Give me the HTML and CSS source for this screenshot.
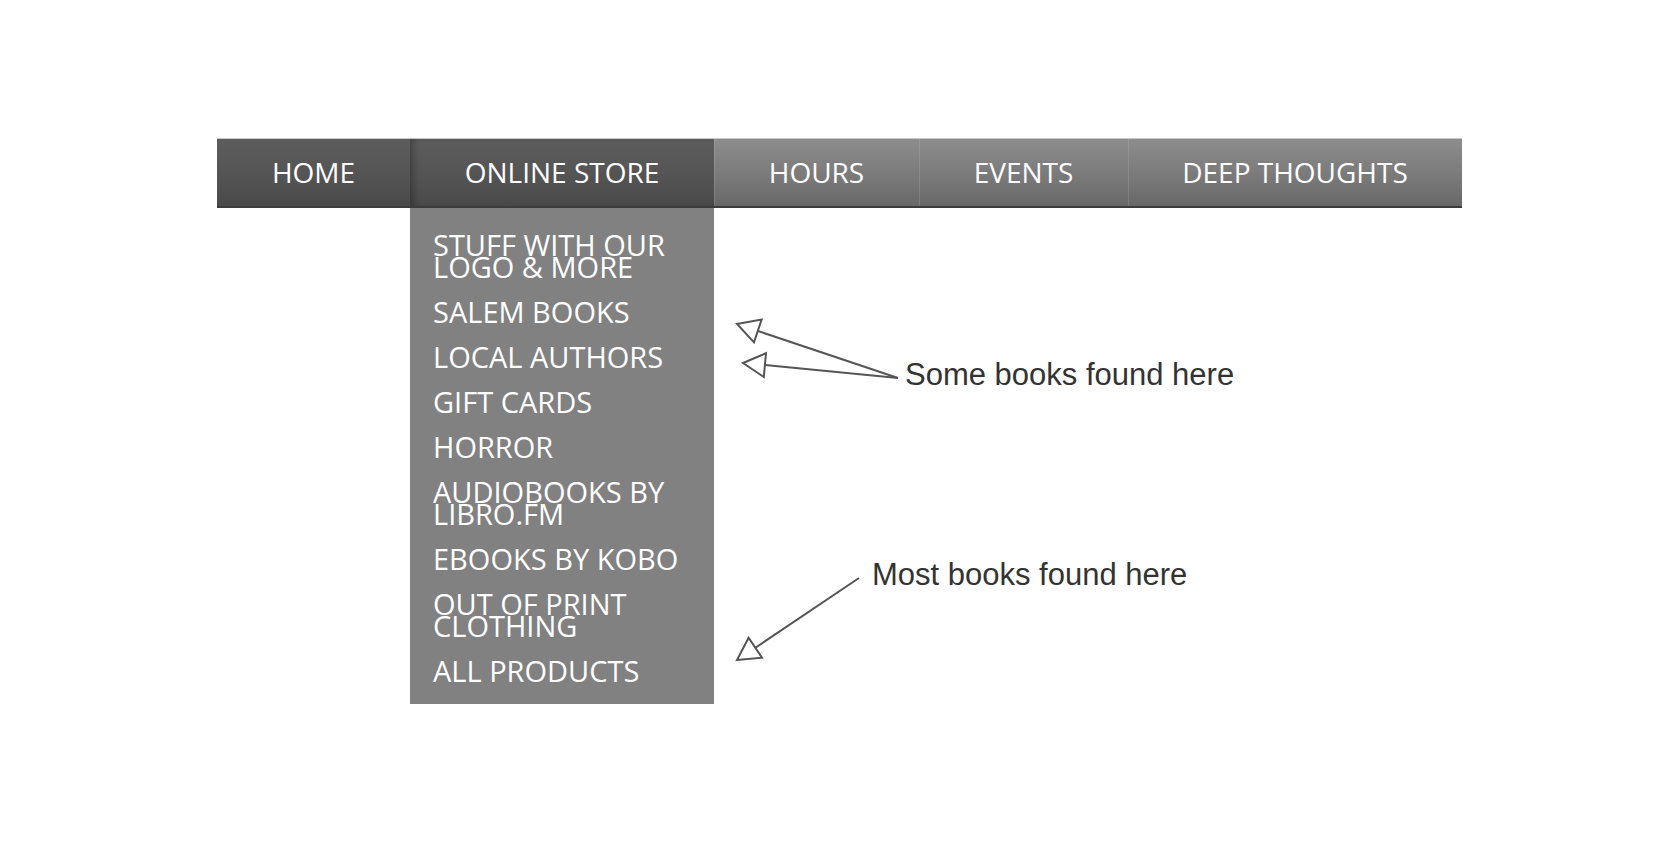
FILE: index.html
```html
<!DOCTYPE html>
<html lang="en">
<head>
  <meta charset="UTF-8" />
  <meta name="viewport" content="width=device-width, initial-scale=1.0" />
  <title>Bookstore menu</title>
  <link rel="stylesheet" href="styles.css">
</head>
<body>
  <div class="page">
    <nav class="menu">
      <ul class="menu-bar">
        <li class="menu-item dark">HOME</li>
        <li class="menu-item dark open">ONLINE STORE
          <ul class="submenu">
            <li>STUFF WITH OUR LOGO &amp; MORE</li>
            <li>SALEM BOOKS</li>
            <li>LOCAL AUTHORS</li>
            <li>GIFT CARDS</li>
            <li>HORROR</li>
            <li>AUDIOBOOKS BY LIBRO.FM</li>
            <li>EBOOKS BY KOBO</li>
            <li>OUT OF PRINT CLOTHING</li>
            <li>ALL PRODUCTS</li>
          </ul>
        </li>
        <li class="menu-item">HOURS</li>
        <li class="menu-item">EVENTS</li>
        <li class="menu-item">DEEP THOUGHTS</li>
      </ul>
    </nav>

    <!-- callouts pointing into the store menu -->
    <svg class="arrows" width="1680" height="844" viewBox="0 0 1680 844">
      <g fill="none" stroke="#555" stroke-width="2" stroke-linejoin="miter">
        <line x1="898" y1="378" x2="758" y2="331" />
        <polygon points="737,324 761.6,319.6 754,342.4" />
        <line x1="898" y1="378" x2="765" y2="365" />
        <polygon points="743,363 766,353.2 763.8,377" />
        <line x1="859" y1="578" x2="755" y2="648" />
        <polygon points="737,660 762,657.7 748.6,637.7" />
      </g>
    </svg>
    <p class="note note-some">Some books found here</p>
    <p class="note note-most">Most books found here</p>
  </div>
</body>
</html>
```

FILE: styles.css
```css
body {
  margin: 0;
  background: #fff;
  font-family: "Open Sans", sans-serif;
}
.page {
  position: relative;
  width: 1680px;
  height: 844px;
}
.menu {
  padding: 138px 0 0 217px;
}
.menu-bar {
  display: grid;
  grid-template-columns: 193px 304px 205px 209px 334px;
  width: 1245px;
  margin: 0;
  padding: 0;
  list-style: none;
}
.menu-item {
  position: relative;
  box-sizing: border-box;
  height: 70px;
  line-height: 67px;
  text-align: center;
  font-size: 28px;
  color: #fff;
  background: linear-gradient(#8c8c8c, #7a7a7a 55%, #686868);
  border-top: 1px solid #c8c8c8;
  border-bottom: 2px solid #3c3c3c;
  box-shadow: inset 1px 0 0 rgba(255, 255, 255, 0.12);
}
.menu-item.dark {
  background: linear-gradient(#5d5d5d, #545454 55%, #4a4a4a);
  box-shadow: none;
}
.menu-item.open {
  box-shadow: inset 6px 0 8px -4px rgba(0, 0, 0, 0.35);
}
.submenu {
  position: absolute;
  top: calc(100% + 2px);
  left: 0;
  z-index: 2;
  box-sizing: border-box;
  width: 304px;
  margin: 0;
  padding: 14px 22px 11px 23px;
  list-style: none;
  background: #818181;
  text-align: left;
  font-size: 29px;
}
.submenu li {
  padding: 12px 0 11px;
  line-height: 22px;
}
.arrows {
  position: absolute;
  top: 0;
  left: 0;
  pointer-events: none;
}
.note {
  position: absolute;
  margin: 0;
  font-family: "Liberation Sans", Arial, sans-serif;
  font-size: 31px;
  line-height: 1;
  color: #333;
  white-space: nowrap;
}
.note-some {
  top: 359px;
  left: 905px;
}
.note-most {
  top: 559px;
  left: 872px;
}
```
